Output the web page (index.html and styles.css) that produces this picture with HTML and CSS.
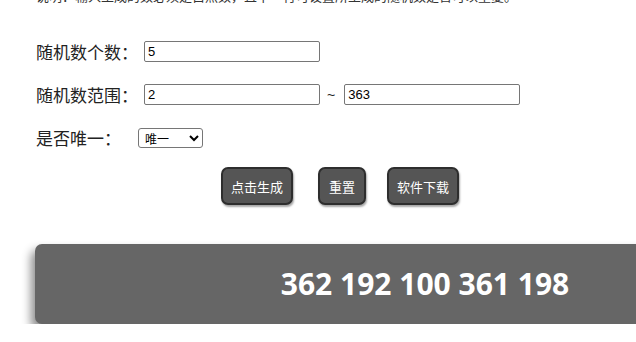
FILE: index.html
```html
<!DOCTYPE html>
<html lang="zh-CN">
<head>
<meta charset="UTF-8">
<title>随机数生成器</title>
<link rel="stylesheet" href="styles.css">
</head>
<body>
<div class="page">
  <p class="intro">说明：输入生成的数必须是自然数，且下一行可设置所生成的随机数是否可以重复。</p>

  <div class="row">
    <label class="label" for="count">随机数个数：</label>
    <input type="text" id="count" class="field" value="5">
  </div>
  <div class="row">
    <label class="label" for="min">随机数范围：</label>
    <input type="text" id="min" class="field" value="2">
    <span class="tilde">~</span>
    <input type="text" id="max" class="field" value="363">
  </div>
  <div class="row">
    <label class="label label-short" for="unique">是否唯一：</label>
    <select id="unique" class="picker">
      <option>唯一</option>
      <option>不唯一</option>
    </select>
  </div>

  <div class="actions">
    <button class="btn btn-gen">点击生成</button>
    <button class="btn btn-reset">重置</button>
    <button class="btn btn-down">软件下载</button>
  </div>

  <div class="result">362 192 100 361 198</div>
</div>
</body>
</html>
```

FILE: styles.css
```css
body {
  margin: 0;
  padding: 0;
  font-family: "Noto Sans CJK SC", "Noto Sans", sans-serif;
  color: #222;
  background-color: #fff;
  overflow: hidden;
}

.page {
  padding-left: 36px;
  width: 900px;
}

.intro {
  margin: -14px 0 0 0;
  font-size: 13px;
  line-height: 19px;
  color: #333;
}

.row {
  display: flex;
  align-items: center;
  height: 43px;
}

.row:first-of-type {
  margin-top: 25px;
}

.label {
  width: 108px;
  font-size: 17px;
  line-height: 20px;
}

.label-short {
  width: 102px;
}

.field {
  width: 176px;
  height: 21px;
  box-sizing: border-box;
  border: 1px solid #767676;
  border-radius: 2px;
  padding: 1px 3px;
  font-family: "Liberation Sans", Arial, sans-serif;
  font-size: 13px;
  color: #000;
}

.tilde {
  margin: 0 9px 0 7px;
  font-family: "Liberation Sans", Arial, sans-serif;
  font-size: 14px;
}

.picker {
  width: 65px;
  height: 20px;
  box-sizing: border-box;
  border: 1px solid #767676;
  border-radius: 3px;
  font-family: "Noto Sans CJK SC", sans-serif;
  font-size: 12px;
  padding: 0 2px;
  background-color: #fff;
  color: #000;
}

.actions {
  display: flex;
  padding-left: 185px;
  margin-top: 8px;
}

.btn {
  height: 38px;
  padding: 0 8px;
  border: 2px solid #2e2e2e;
  border-radius: 7px;
  background-color: #555;
  color: #fff;
  font-family: "Noto Sans CJK SC", sans-serif;
  font-size: 13px;
  box-shadow: 1px 2px 2px rgba(0, 0, 0, 0.35);
  cursor: pointer;
}

.btn-reset {
  margin-left: 25px;
  padding: 0 9px;
}

.btn-down {
  margin-left: 21px;
}

.result {
  margin-top: 39px;
  margin-left: -1px;
  width: 780px;
  height: 80px;
  border-radius: 7px;
  background-color: #666;
  color: #fff;
  font-family: "Open Sans", "Noto Sans", sans-serif;
  font-weight: bold;
  font-size: 30px;
  line-height: 80px;
  text-align: center;
  box-shadow: -4px 6px 10px rgba(0, 0, 0, 0.45);
}
```
